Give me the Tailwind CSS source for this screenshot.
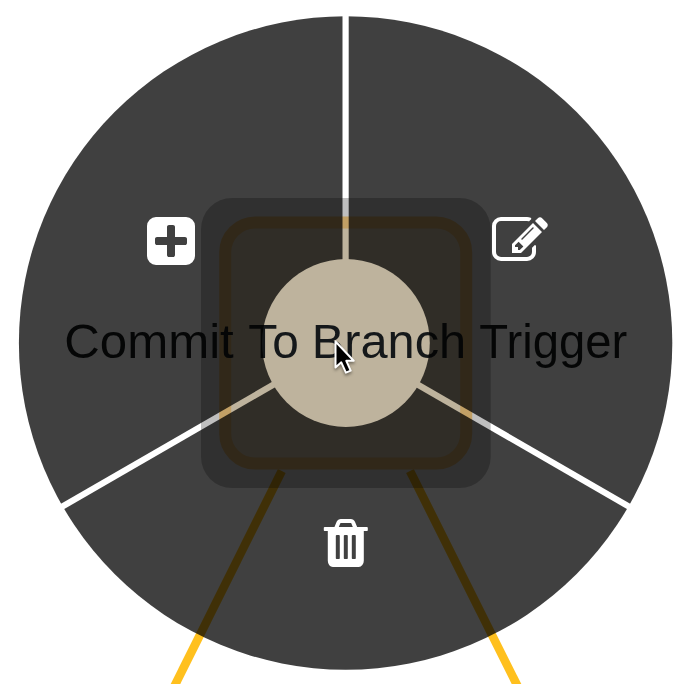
<!DOCTYPE html>
<html lang="en">
<head>
<meta charset="utf-8">
<title>Trigger node menu</title>
<script src="https://cdn.jsdelivr.net/npm/@tailwindcss/browser@4"></script>
</head>
<body class="bg-white overflow-hidden">
<svg class="block w-[689px] h-[684px]" viewBox="0 0 689 684">
  <defs>
    <mask id="ring" maskUnits="userSpaceOnUse" x="0" y="0" width="689" height="684">
      <circle cx="345.6" cy="343" r="326.7" fill="#fff"/>
      <circle cx="345.9" cy="343" r="83.9" fill="#000"/>
      <g stroke="#000" stroke-width="6.2">
        <path d="M345.6 343V0"/>
        <path d="M345.6 343L42.5 518"/>
        <path d="M345.6 343L648.7 518"/>
      </g>
    </mask>
  </defs>
  <!-- connectors -->
  <g stroke="#ffc01e" stroke-width="8.6">
    <path d="M281.8 471L170.5 694"/>
    <path d="M410 471L521.5 694"/>
  </g>
  <!-- node -->
  <rect x="201" y="198" width="289.7" height="290" rx="31" fill="#000" fill-opacity=".25"/>
  <rect x="225.2" y="222.5" width="241" height="241" rx="30" fill="#beb39d" stroke="#c2a065" stroke-width="12"/>
  <text y="358" class="font-['Liberation_Sans',Arial,sans-serif] text-[49px]" fill="#15181a">
    <tspan x="64.3" textLength="169.5" lengthAdjust="spacingAndGlyphs">Commit</tspan>
    <tspan x="248.3" textLength="50.5" lengthAdjust="spacingAndGlyphs">To</tspan>
    <tspan x="311.7" textLength="154.5" lengthAdjust="spacingAndGlyphs">Branch</tspan>
    <tspan x="479.3" textLength="148" lengthAdjust="spacingAndGlyphs">Trigger</tspan>
  </text>
  <!-- radial menu -->
  <rect width="689" height="684" fill="#000" fill-opacity=".75" mask="url(#ring)"/>
  <g fill="#fff">
    <path transform="translate(143 213) scale(.03125)" d="M1408 960v-128q0-26-19-45t-45-19h-320v-320q0-26-19-45t-45-19h-128q-26 0-45 19t-19 45v320h-320q-26 0-45 19t-19 45v128q0 26 19 45t45 19h320v320q0 26 19 45t45 19h128q26 0 45-19t19-45v-320h320q26 0 45-19t19-45zm256-544v960q0 119-84.5 203.5t-203.5 84.5h-960q-119 0-203.5-84.5t-84.5-203.5v-960q0-119 84.5-203.5t203.5-84.5h960q119 0 203.5 84.5t84.5 203.5z"/>
    <path transform="translate(492 213) scale(.03125)" d="M888 1184l116-116-152-152-116 116v56h96v96h56zm440-720q-16-16-33 1l-350 350q-17 17-1 33t33-1l350-350q17-17 1-33zm80 594v190q0 119-84.5 203.5t-203.5 84.5h-832q-119 0-203.5-84.5t-84.5-203.5v-832q0-119 84.5-203.5t203.5-84.5h832q63 0 117 25 15 7 18 23 3 17-9 29l-49 49q-14 14-32 8-23-6-45-6h-832q-66 0-113 47t-47 113v832q0 66 47 113t113 47h832q66 0 113-47t47-113v-126q0-13 9-22l64-64q15-15 35-7t20 29zm-96-738l288 288-672 672h-288v-288zm444 132l-92 92-288-288 92-92q28-28 68-28t68 28l152 152q28 28 28 68t-28 68z"/>
    <path transform="translate(317.8 515) scale(.03125)" d="M704 1376v-704q0-14-9-23t-23-9h-64q-14 0-23 9t-9 23v704q0 14 9 23t23 9h64q14 0 23-9t9-23zm256 0v-704q0-14-9-23t-23-9h-64q-14 0-23 9t-9 23v704q0 14 9 23t23 9h64q14 0 23-9t9-23zm256 0v-704q0-14-9-23t-23-9h-64q-14 0-23 9t-9 23v704q0 14 9 23t23 9h64q14 0 23-9t9-23zm-544-992h448l-48-117q-7-9-17-11h-317q-10 2-17 11zm928 32v64q0 14-9 23t-23 9h-96v948q0 83-47 143.5t-113 60.5h-832q-66 0-113-58.5t-47-141.5v-952h-96q-14 0-23-9t-9-23v-64q0-14 9-23t23-9h309l70-167q15-37 54-63t79-26h320q40 0 79 26t54 63l70 167h309q14 0 23 9t9 23z"/>
  </g>
  <!-- pointer -->
  <path class="drop-shadow-[0_2px_1.5px_rgba(0,0,0,0.4)]" d="M335.5 341.5V367.5l5.8-5.2 4.6 10.4 4.8-2.1-4.4-9.8h7.4z" fill="#000" stroke="#fff" stroke-width="2" stroke-linejoin="round"/>
</svg>
</body>
</html>
